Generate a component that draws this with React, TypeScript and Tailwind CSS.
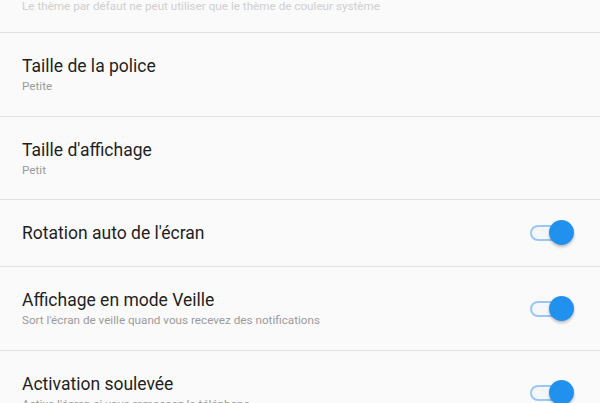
import React from "react";

type Row = {
  title?: string;
  sub?: string;
  toggle?: boolean;
  h: string;
};

function Toggle() {
  return (
    <div className="relative h-[26px] w-[44px] shrink-0">
      <div className="absolute left-0 top-[5px] h-[16px] w-[34px] rounded-full border-2 border-[#9cc7f2] bg-[#f4f8fc]" />
      <div className="absolute right-0 top-0 h-[25px] w-[25px] rounded-full bg-[#2191ef] shadow-[0_2px_3px_rgba(0,0,0,0.25)]" />
    </div>
  );
}

export default function App() {
  const rows: Row[] = [
    { title: "Taille de la police", sub: "Petite", h: "h-[84px]" },
    { title: "Taille d'affichage", sub: "Petit", h: "h-[83px]" },
    { title: "Rotation auto de l'écran", toggle: true, h: "h-[67px]" },
    {
      title: "Affichage en mode Veille",
      sub: "Sort l'écran de veille quand vous recevez des notifications",
      toggle: true,
      h: "h-[84px]",
    },
    {
      title: "Activation soulevée",
      sub: "Active l'écran si vous ramassez le téléphone",
      toggle: true,
      h: "h-[84px]",
    },
  ];

  return (
    <div
      className="h-[403px] w-[600px] overflow-hidden bg-[#fafafa]"
      style={{ fontFamily: "Roboto, 'Noto Sans', sans-serif" }}
    >
      <div className="flex h-[33px] items-start border-b border-[#e2e2e2] pl-[22px]">
        <p className="-mt-[2px] text-[11.7px] text-[#cfcfcf]">
          Le thème par défaut ne peut utiliser que le thème de couleur système
        </p>
      </div>
      {rows.map((r, i) => (
        <div
          key={i}
          className={`flex ${r.h} items-center justify-between border-b border-[#e2e2e2] pl-[22px] pr-[26px]`}
        >
          <div className="flex flex-col">
            <span className="text-[17.5px] leading-[22px] text-[#1f1f1f]">{r.title}</span>
            {r.sub && (
              <span className="mt-[1px] text-[11.7px] leading-[16px] text-[#9a9a9a]">{r.sub}</span>
            )}
          </div>
          {r.toggle && <Toggle />}
        </div>
      ))}
    </div>
  );
}
